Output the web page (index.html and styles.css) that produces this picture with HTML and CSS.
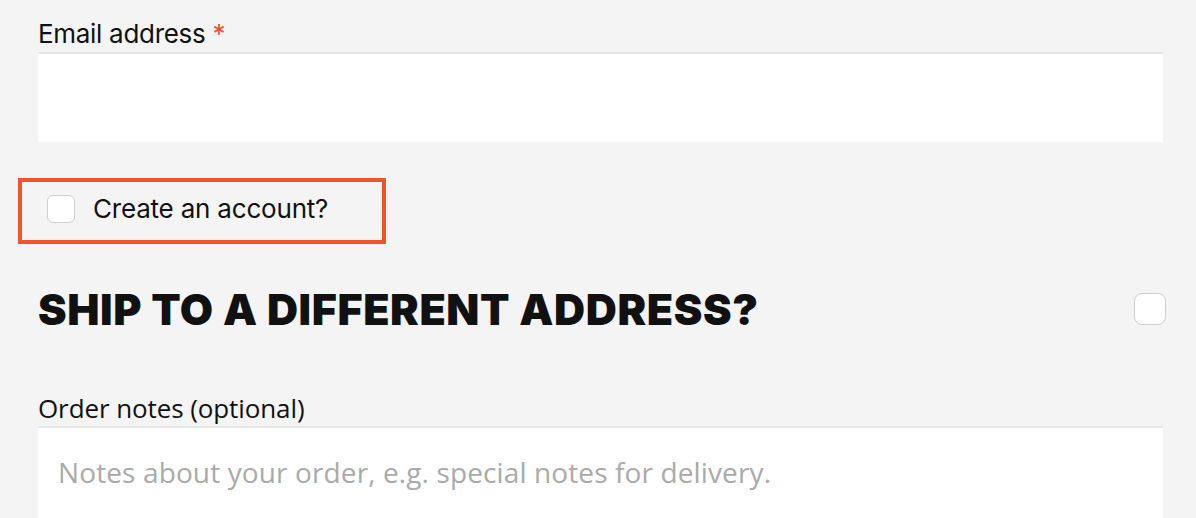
FILE: index.html
```html
<!DOCTYPE html>
<html lang="en">
<head>
  <meta charset="UTF-8">
  <meta name="viewport" content="width=device-width, initial-scale=1.0">
  <title>Checkout</title>
  <link rel="stylesheet" href="styles.css">
</head>
<body>
  <div class="container">
    <form class="checkoutForm">
      <div class="field">
        <label class="fieldLabel" for="email">Email address <span class="required">*</span></label>
        <input class="textInput" type="email" id="email">
      </div>

      <label class="createAccount">
        <span class="checkbox"></span>
        <span class="checkboxText">Create an account?</span>
      </label>

      <div class="shipRow">
        <h3 class="shipTitle">SHIP TO A DIFFERENT ADDRESS?</h3>
        <span class="checkbox big"></span>
      </div>

      <div class="field notes">
        <label class="fieldLabel alt" for="notes">Order notes (optional)</label>
        <textarea class="textArea" id="notes" placeholder="Notes about your order, e.g. special notes for delivery."></textarea>
      </div>
    </form>
  </div>
</body>
</html>
```

FILE: styles.css
```css
body{
  margin: 0;
  width: 100vw;
  height: 100vh;
  overflow: hidden;
  background-color: #f4f4f4;
  font-family: 'Inter', sans-serif;
  color: #111;
}

.container{
  padding: 18px 33px 0 38px;
}

.checkoutForm{
  display: flex;
  flex-direction: column;
}

.field{
  display: flex;
  flex-direction: column;
}

.fieldLabel{
  font-size: 26px;
  letter-spacing: -0.3px;
  line-height: 32px;
  margin-bottom: 2px;
}

.fieldLabel.alt{
  font-family: 'Open Sans', sans-serif;
  font-size: 26px;
  letter-spacing: -0.1px;
}

.required{
  color: #e5512d;
}

.textInput,
.textArea{
  box-sizing: border-box;
  width: 100%;
  border: none;
  border-top: 2px solid #e5e5e5;
  background-color: #fff;
  margin: 0;
  outline: none;
}

.textInput{
  height: 90px;
}

.textArea{
  height: 92px;
  resize: none;
  padding: 25px 20px 0;
  font-family: 'Open Sans', sans-serif;
  font-size: 28px;
  letter-spacing: 0.12px;
}

.textArea::placeholder{
  color: #aaa;
}

.createAccount{
  align-self: flex-start;
  display: flex;
  align-items: center;
  gap: 18px;
  margin: 36px 0 0 -20px;
  padding: 11px 54px 15px 25px;
  border: 4px solid #ee5528;
}

.checkbox{
  box-sizing: border-box;
  width: 28px;
  height: 28px;
  border: 1px solid #cfcfcf;
  border-radius: 6px;
  background-color: #fff;
}

.checkbox.big{
  width: 32px;
  height: 32px;
  border-radius: 8px;
  margin-right: -3px;
}

.checkboxText{
  font-size: 26px;
  letter-spacing: -0.2px;
  line-height: 32px;
}

.shipRow{
  display: flex;
  align-items: center;
  justify-content: space-between;
  margin-top: 40px;
}

.shipTitle{
  margin: 0;
  font-size: 43px;
  font-weight: 900;
  letter-spacing: 0.6px;
  line-height: 50px;
}

.notes{
  margin-top: 58px;
}
```
